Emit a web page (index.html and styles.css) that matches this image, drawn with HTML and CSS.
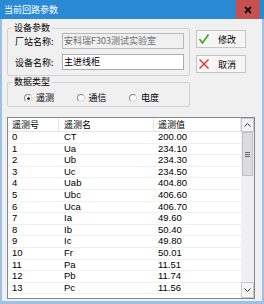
FILE: index.html
```html
<!DOCTYPE html>
<html lang="zh-CN">
<head>
  <meta charset="UTF-8" />
  <title>当前回路参数</title>
  <link rel="stylesheet" href="styles.css">
</head>
<body>
  <div class="window">
    <div class="titlebar">
      <span class="title">当前回路参数</span>
      <span class="close">
        <svg width="8" height="8" viewBox="0 0 8 8"><path d="M1 1L7 7M7 1L1 7" stroke="#111" stroke-width="1.8"/></svg>
      </span>
    </div>

    <div class="body">
      <div class="top">
        <div class="groups">
          <div class="group device">
            <div class="group-title">设备参数</div>
            <div class="fields">
              <div class="field">
                <span class="field-label">厂站名称:</span>
                <div class="input readonly">安科瑞F303测试实验室</div>
              </div>
              <div class="field">
                <span class="field-label">设备名称:</span>
                <div class="input">主进线柜</div>
              </div>
            </div>
          </div>

          <div class="group type">
            <div class="group-title">数据类型</div>
            <div class="radios">
              <label class="radio"><span class="circle checked"></span>遥测</label>
              <label class="radio"><span class="circle"></span>通信</label>
              <label class="radio"><span class="circle"></span>电度</label>
            </div>
          </div>
        </div>

        <div class="buttons">
          <button class="btn">
            <svg width="10" height="10" viewBox="0 0 10 10"><path d="M0.5 5L3.5 9L9.5 0.5" fill="none" stroke="#3fa522" stroke-width="1.6"/></svg>
            修改
          </button>
          <button class="btn">
            <svg width="10" height="10" viewBox="0 0 10 10"><path d="M0.5 0.5L9.5 9.5M9.5 0.5L0.5 9.5" stroke="#e03a3a" stroke-width="1.5"/></svg>
            取消
          </button>
        </div>
      </div>

      <div class="list">
        <div class="list-main">
          <div class="head">
            <span>遥测号</span><span>遥测名</span><span>遥测值</span>
          </div>
          <div class="row"><span>0</span><span>CT</span><span>200.00</span></div>
          <div class="row"><span>1</span><span>Ua</span><span>234.10</span></div>
          <div class="row"><span>2</span><span>Ub</span><span>234.30</span></div>
          <div class="row"><span>3</span><span>Uc</span><span>234.50</span></div>
          <div class="row"><span>4</span><span>Uab</span><span>404.80</span></div>
          <div class="row"><span>5</span><span>Ubc</span><span>406.60</span></div>
          <div class="row"><span>6</span><span>Uca</span><span>406.70</span></div>
          <div class="row"><span>7</span><span>Ia</span><span>49.60</span></div>
          <div class="row"><span>8</span><span>Ib</span><span>50.40</span></div>
          <div class="row"><span>9</span><span>Ic</span><span>49.80</span></div>
          <div class="row"><span>10</span><span>Fr</span><span>50.01</span></div>
          <div class="row"><span>11</span><span>Pa</span><span>11.51</span></div>
          <div class="row"><span>12</span><span>Pb</span><span>11.74</span></div>
          <div class="row"><span>13</span><span>Pc</span><span>11.56</span></div>
        </div>

        <div class="scrollbar">
          <div class="sb-btn">
            <svg width="7" height="4" viewBox="0 0 7 4"><path d="M0.5 3.5L3.5 0.5L6.5 3.5" fill="none" stroke="#333" stroke-width="1"/></svg>
          </div>
          <div class="sb-thumb">
            <svg width="5" height="5" viewBox="0 0 5 5"><path d="M0 0.5H5M0 2.5H5M0 4.5H5" stroke="#666" stroke-width="1"/></svg>
          </div>
          <div class="sb-track"></div>
          <div class="sb-btn down">
            <svg width="7" height="4" viewBox="0 0 7 4"><path d="M0.5 0.5L3.5 3.5L6.5 0.5" fill="none" stroke="#333" stroke-width="1"/></svg>
          </div>
        </div>
      </div>
    </div>
  </div>
</body>
</html>
```

FILE: styles.css
```css
* {
  box-sizing: border-box;
}

body {
  margin: 0;
  font-family: "Noto Sans CJK SC", "Noto Sans", sans-serif;
  font-size: 9px;
  color: #000;
}

.window {
  width: 264px;
  height: 304px;
  display: flex;
  flex-direction: column;
  background: #f0f0f0;
}

.titlebar {
  height: 19px;
  display: flex;
  align-items: flex-start;
  padding: 0 4px;
  background: #2b8ad6;
  color: white;
}

.title {
  flex: 1;
  line-height: 12px;
  margin-top: 4px;
}

.close {
  width: 24px;
  height: 19px;
  display: flex;
  align-items: center;
  justify-content: center;
  background: #c75050;
}

.body {
  flex: 1;
  min-height: 0;
  display: flex;
  flex-direction: column;
  padding: 9px 7px 2px 5px;
  border: solid #9cc0e6;
  border-width: 0 2px 3px 2px;
}

.top {
  display: flex;
  gap: 6px;
}

.groups {
  width: 183px;
}

.group {
  border: 1px solid #d2d2d2;
  border-radius: 2px;
}

.group-title {
  width: fit-content;
  margin: -7px 0 0 4px;
  padding: 0 2px;
  line-height: 12px;
  background: #f0f0f0;
}

.device {
  padding: 0 5px 5px 7px;
}

.device .group-title {
  margin-left: -3px;
}

.fields {
  display: flex;
  flex-direction: column;
  gap: 5px;
  margin-top: -1px;
}

.field {
  display: flex;
  align-items: center;
  height: 16px;
}

.field-label {
  width: 47px;
}

.input {
  width: 122px;
  height: 16px;
  padding-left: 1px;
  line-height: 14px;
  border: 1px solid #abadb3;
  background: white;
}

.input.readonly {
  background: #f0f0f0;
  border-color: #b9b9b9;
  color: #6d6d6d;
}

.type {
  margin-top: 6px;
  padding-bottom: 2px;
}

.radios {
  display: flex;
  align-items: center;
  height: 12px;
  margin-top: 4px;
  padding-left: 16px;
}

.radio {
  width: 52.5px;
  display: flex;
  align-items: center;
  gap: 4px;
  line-height: 12px;
}

.circle {
  width: 8px;
  height: 8px;
  border-radius: 50%;
  border: 1px solid #8a8a8a;
  border-right-color: #d8d8d8;
  border-bottom-color: #d8d8d8;
  background: #fafafa;
  display: flex;
  align-items: center;
  justify-content: center;
}

.circle.checked::after {
  content: "";
  width: 3px;
  height: 3px;
  border-radius: 50%;
  background: #333;
}

.buttons {
  width: 50px;
  display: flex;
  flex-direction: column;
  gap: 7px;
  padding-top: 2px;
}

.btn {
  height: 18px;
  display: flex;
  align-items: center;
  gap: 9px;
  padding: 0 0 0 2px;
  border: 1px solid #c6c6c6;
  background: #f6f6f6;
  font: inherit;
  color: #000;
}

.list {
  flex: 1;
  min-height: 0;
  display: flex;
  margin-top: 10px;
  border: 1px solid #828790;
  background: white;
  overflow: hidden;
}

.list-main {
  flex: 1;
  overflow: hidden;
}

.head,
.row {
  display: grid;
  grid-template-columns: 51px 95px 87px;
}

.head {
  height: 14px;
  border-bottom: 1px solid #e5e5e5;
  line-height: 13px;
}

.head span {
  padding-left: 4px;
  border-right: 1px solid #e5e5e5;
}

.row {
  height: 11.6px;
  border-bottom: 1px solid #f0f0f0;
  font-family: "Liberation Sans", Arial, sans-serif;
  font-size: 9.5px;
  line-height: 10.6px;
}

.row span {
  padding-left: 4px;
}

.head span:nth-child(2),
.row span:nth-child(2) {
  padding-left: 5px;
}

.scrollbar {
  width: 13px;
  display: flex;
  flex-direction: column;
  background: #f0f0f0;
}

.sb-btn {
  height: 14px;
  display: flex;
  align-items: center;
  justify-content: center;
  border: 1px solid #c9c9c9;
  background: #f4f4f4;
}

.sb-btn.down {
  height: 16px;
}

.sb-thumb {
  height: 44px;
  margin: 0 1px;
  display: flex;
  align-items: center;
  justify-content: center;
  border: 1px solid #c2c2c2;
  background: #dcdcdc;
}

.sb-track {
  flex: 1;
}
```
